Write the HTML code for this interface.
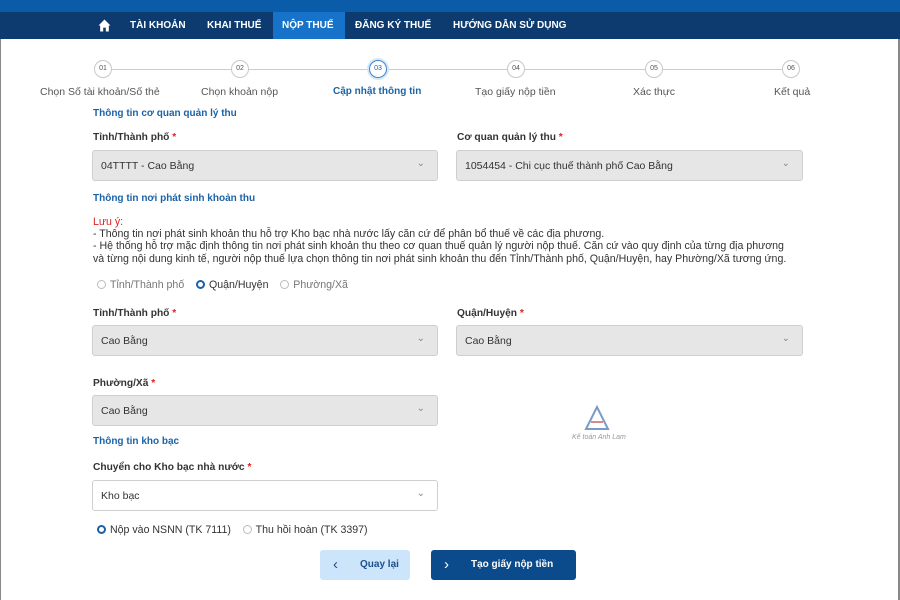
<!DOCTYPE html><html><head><meta charset="utf-8"><style>
*{margin:0;padding:0;box-sizing:border-box}
body{width:900px;height:600px;position:relative;overflow:hidden;background:#fff;font-family:"Liberation Sans",sans-serif;color:#333;font-size:10px}
.a{position:absolute;white-space:nowrap}
.top{left:0;top:0;width:900px;height:12px;background:#0a5ca8}
.nav{left:0;top:12px;width:900px;height:27px;background:#0d3b6f}
.nav span{position:absolute;top:8px;color:#fff;font-weight:bold;font-size:10px}
.act{left:273px;top:12px;width:72px;height:27px;background:#1673c9}
.c{width:18px;height:18px;border:1.5px solid #c8c8c8;border-radius:50%;font-size:7px;text-align:center;line-height:15px;color:#555;background:#fff}
.line{height:1px;background:#ccc;top:69px}
.st{font-size:10.5px;color:#555;top:86px}
.h{font-weight:bold;color:#1c63a8;font-size:10px}
.l{font-weight:bold;color:#333;font-size:10.2px}
.l b{color:#d22}
.sel{height:31px;background:#e6e6e6;border:1px solid #cfcfcf;border-radius:3px;font-size:10.5px;color:#333;padding:9px 8px}
.sel:after{content:"⌄";position:absolute;right:12px;top:7px;color:#888;font-size:10px}
.r{width:9px;height:9px;border:1px solid #bbb;border-radius:50%;display:inline-block;vertical-align:-1px;margin-right:4px}
.r.on{border:2.5px solid #1a5fa8}
.t{font-size:10.6px;color:#333}
</style></head><body>
<div class="a" style="left:0;top:0;width:1px;height:600px;background:#888"></div>
<div class="a" style="right:0;top:0;width:2px;height:600px;background:#888"></div>
<div class="a top"></div><div class="a nav"></div><div class="a act"></div>
<div class="a nav" style="background:none">
<svg style="position:absolute;left:98px;top:7px" width="13" height="13" viewBox="0 0 12 12"><path d="M6 0.5L0.5 6H2V11.5H4.8V8H7.2V11.5H10V6H11.5Z" fill="#fff"/></svg>
<span style="left:130px">TÀI KHOẢN</span><span style="left:207px">KHAI THUẾ</span><span style="left:282px">NỘP THUẾ</span><span style="left:355px">ĐĂNG KÝ THUẾ</span><span style="left:453px">HƯỚNG DẪN SỬ DỤNG</span></div>
<div class="a line" style="left:112px;width:670px"></div>
<div class="a c" style="left:94px;top:60px">01</div>
<div class="a c" style="left:231px;top:60px">02</div>
<div class="a c" style="left:369px;top:60px;border-color:#3a86d0;color:#1c63a8;box-shadow:0 0 0 2px #d5e7f8">03</div>
<div class="a c" style="left:507px;top:60px">04</div>
<div class="a c" style="left:645px;top:60px">05</div>
<div class="a c" style="left:782px;top:60px">06</div>
<div class="a st" style="left:40px">Chọn Số tài khoản/Số thẻ</div>
<div class="a st" style="left:201px">Chọn khoản nộp</div>
<div class="a st" style="left:333px;color:#1c63a8;font-weight:bold;font-size:10px">Cập nhật thông tin</div>
<div class="a st" style="left:475px">Tạo giấy nộp tiền</div>
<div class="a st" style="left:633px">Xác thực</div>
<div class="a st" style="left:774px">Kết quả</div>
<div class="a h" style="left:93px;top:108px">Thông tin cơ quan quản lý thu</div>
<div class="a l" style="left:93px;top:132px">Tỉnh/Thành phố <b>*</b></div>
<div class="a l" style="left:457px;top:132px">Cơ quan quản lý thu <b>*</b></div>
<div class="a sel" style="left:92px;top:150px;width:346px">04TTTT - Cao Bằng</div>
<div class="a sel" style="left:456px;top:150px;width:347px">1054454 - Chi cục thuế thành phố Cao Bằng</div>
<div class="a h" style="left:93px;top:193px">Thông tin nơi phát sinh khoản thu</div>
<div class="a t" style="left:93px;top:216px;color:#d22">Lưu ý:</div>
<div class="a t" style="left:93px;top:228px">- Thông tin nơi phát sinh khoản thu hỗ trợ Kho bạc nhà nước lấy căn cứ để phân bổ thuế về các địa phương.</div>
<div class="a t" style="left:93px;top:240px">- Hệ thống hỗ trợ mặc định thông tin nơi phát sinh khoản thu theo cơ quan thuế quản lý người nộp thuế. Căn cứ vào quy định của từng địa phương</div>
<div class="a t" style="left:93px;top:253px">và từng nội dung kinh tế, người nộp thuế lựa chọn thông tin nơi phát sinh khoản thu đến Tỉnh/Thành phố, Quận/Huyện, hay Phường/Xã tương ứng.</div>
<div class="a t" style="left:97px;top:279px;color:#777"><span class="r"></span>Tỉnh/Thành phố &nbsp;&nbsp;&nbsp;<span style="color:#333"><span class="r on"></span>Quận/Huyện</span> &nbsp;&nbsp;&nbsp;<span class="r"></span>Phường/Xã</div>
<div class="a l" style="left:93px;top:308px">Tỉnh/Thành phố <b>*</b></div>
<div class="a l" style="left:457px;top:308px">Quận/Huyện <b>*</b></div>
<div class="a sel" style="left:92px;top:325px;width:346px">Cao Bằng</div>
<div class="a sel" style="left:456px;top:325px;width:347px">Cao Bằng</div>
<div class="a l" style="left:93px;top:378px">Phường/Xã <b>*</b></div>
<div class="a sel" style="left:92px;top:395px;width:346px">Cao Bằng</div>
<svg class="a" style="left:582px;top:404px" width="30" height="30" viewBox="0 0 30 30"><path d="M15 3L4 25H26Z" fill="none" stroke="#7a9bc8" stroke-width="2"/><path d="M9 18H21" stroke="#d88" stroke-width="2"/></svg>
<div class="a" style="left:572px;top:434px;font-size:7px;color:#999;font-style:italic">Kế toán Anh Lam</div>
<div class="a h" style="left:93px;top:436px">Thông tin kho bạc</div>
<div class="a l" style="left:93px;top:462px">Chuyển cho Kho bạc nhà nước <b>*</b></div>
<div class="a sel" style="left:92px;top:480px;width:346px;background:#fff">Kho bạc</div>
<div class="a t" style="left:97px;top:524px"><span class="r on"></span>Nộp vào NSNN (TK 7111) &nbsp;&nbsp;&nbsp;<span class="r"></span>Thu hồi hoàn (TK 3397)</div>
<div class="a" style="left:320px;top:550px;width:90px;height:30px;background:#cde5fa;border-radius:3px;color:#1c4f8a;font-weight:bold;font-size:10px;line-height:30px"><span style="position:absolute;left:13px;font-size:15px;font-weight:normal">‹</span><span style="position:absolute;left:40px">Quay lại</span></div>
<div class="a" style="left:431px;top:550px;width:145px;height:30px;background:#0b4b8c;border-radius:3px;color:#fff;font-weight:bold;font-size:10px;line-height:30px"><span style="position:absolute;left:13px;font-size:15px;font-weight:normal">›</span><span style="position:absolute;left:40px">Tạo giấy nộp tiền</span></div>
</body></html>
